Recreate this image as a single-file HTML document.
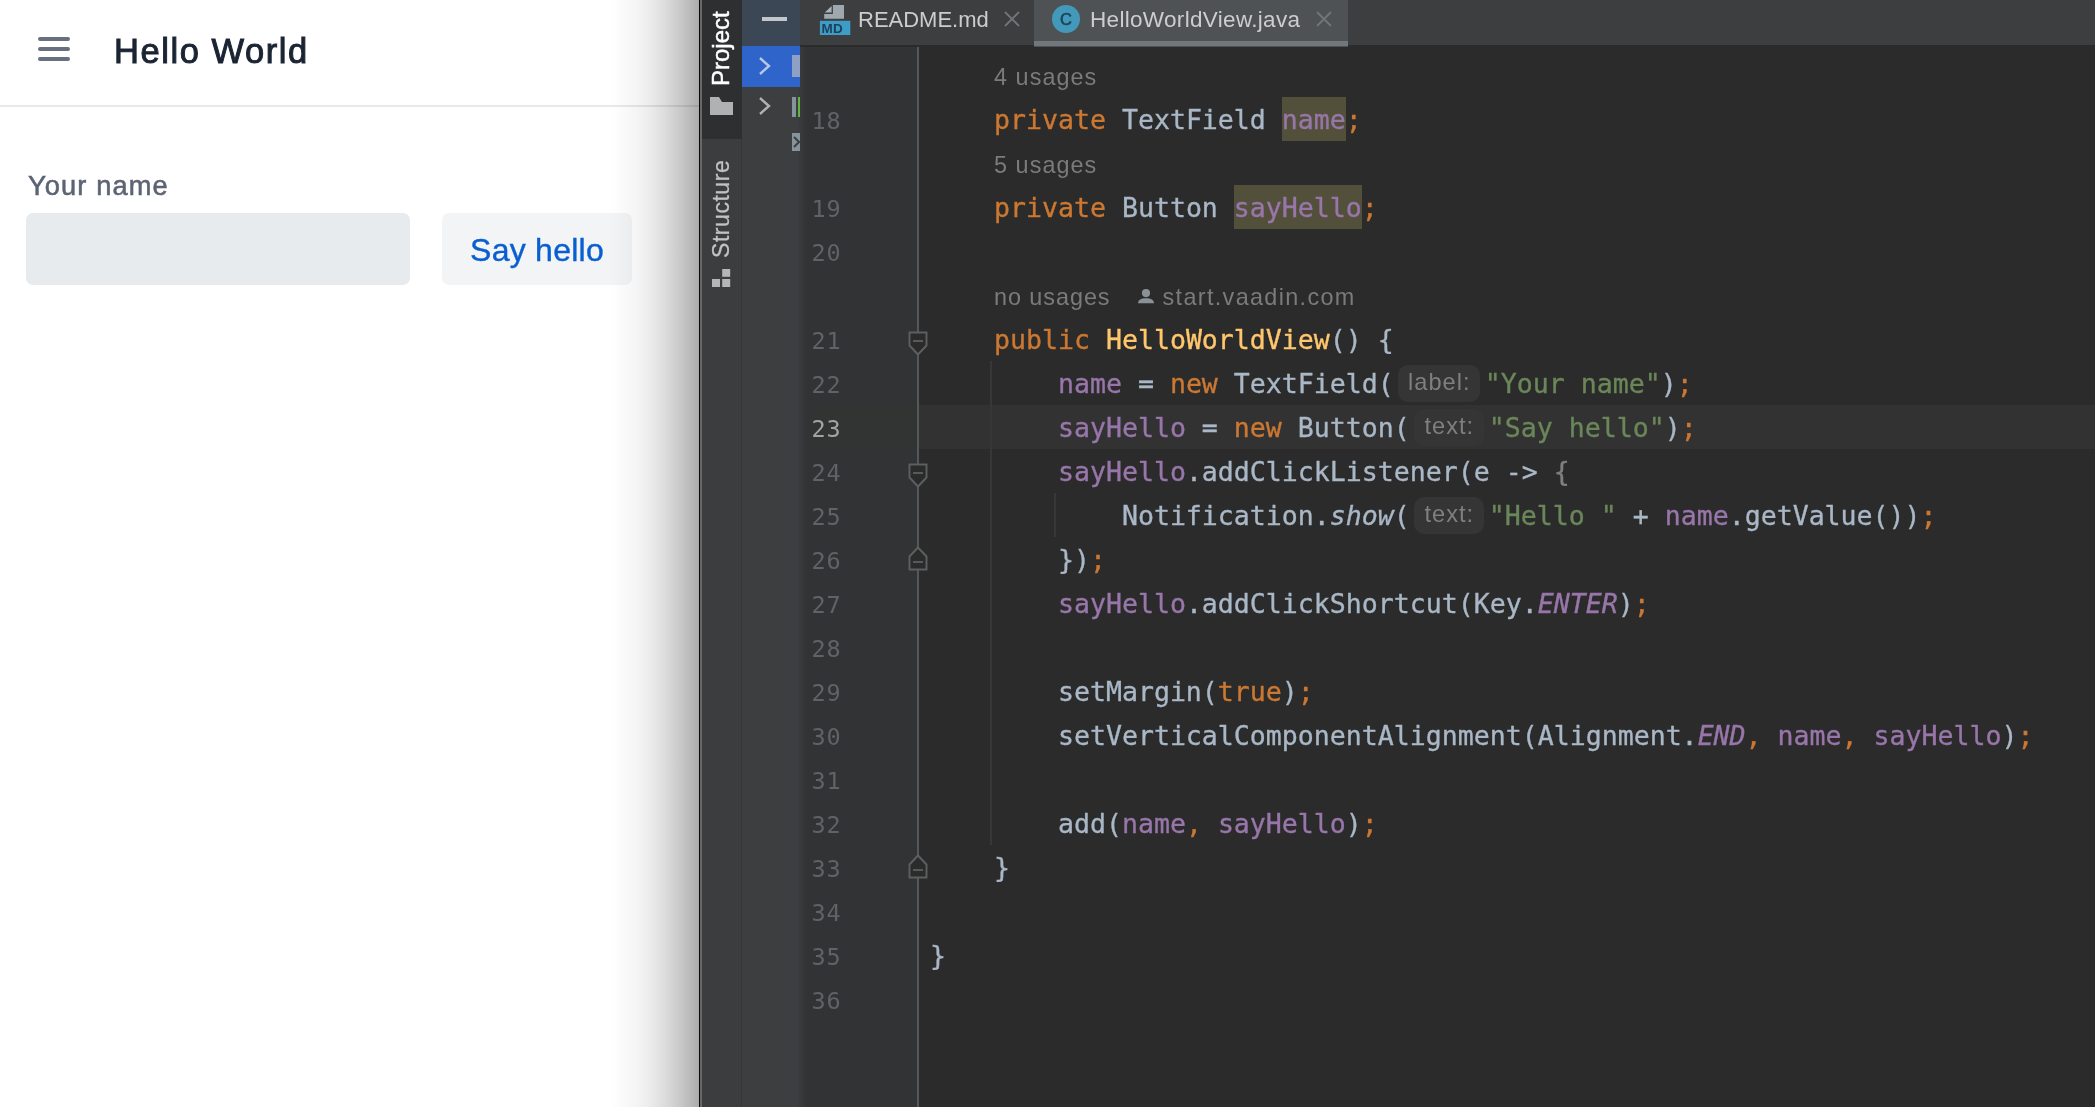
<!DOCTYPE html>
<html lang="en">
<head>
<meta charset="utf-8">
<title>Hello World</title>
<style>
*{box-sizing:border-box;margin:0;padding:0}
html,body{width:2095px;height:1107px;overflow:hidden;background:#2b2b2b}
body{position:relative;font-family:"Liberation Sans",sans-serif;-webkit-font-smoothing:antialiased}
.abs{position:absolute}
/* ---------- left: Vaadin app ---------- */
#app{position:absolute;left:0;top:0;width:699px;height:1107px;background:#fff;overflow:hidden}
#app .hdrline{position:absolute;left:0;top:105px;width:699px;height:2px;background:#e7e9ec}
#app .burger i{position:absolute;left:38px;width:32px;height:4.4px;border-radius:2.2px;background:#687080}
#app h1{position:absolute;left:114px;top:29px;font-size:34.500px;line-height:45.500px;font-weight:400;color:#1b2433;letter-spacing:1.560px;-webkit-text-stroke:1px #1b2433;white-space:nowrap}
#app .lbl{position:absolute;left:28px;top:168px;font-size:27.2px;line-height:36px;color:#5c6473;white-space:nowrap;letter-spacing:1.150px;-webkit-text-stroke:.55px #5c6473}
#app .inp{position:absolute;left:26px;top:213px;width:384px;height:72px;border-radius:7px;background:#e8ebed}
#app .btn{position:absolute;left:442px;top:213px;width:190px;height:72px;border-radius:7px;background:#f2f4f6;color:#0a5fd0;font-size:32px;line-height:74px;letter-spacing:.25px;text-align:center;white-space:nowrap;-webkit-text-stroke:0.4px #0a5fd0}
#app .shade{position:absolute;left:610px;top:0;width:89px;height:1107px;background:linear-gradient(90deg,rgba(0,0,0,0) 0%,rgba(0,0,0,.016) 12%,rgba(0,0,0,.04) 29%,rgba(0,0,0,.078) 46%,rgba(0,0,0,.145) 64%,rgba(0,0,0,.224) 81%,rgba(0,0,0,.31) 97%,rgba(0,0,0,.33) 100%)}
/* ---------- right: IDE ---------- */
#edge{z-index:5;position:absolute;left:699px;top:0;width:2.600px;height:1107px;background:linear-gradient(90deg,#080808 0,#080808 1.100px,#676869 1.300px,#676869 2.600px)}
#strip{position:absolute;left:701px;top:0;width:41px;height:1107px;background:#3c3d3f;border-right:1.600px solid #353638}
#strip .sel{position:absolute;left:0;top:0;width:41px;height:139px;background:#2d2f30}
.vtxt{position:absolute;transform-origin:0 0;transform:rotate(-90deg);white-space:nowrap;font-size:23px;line-height:26px}
#proj{position:absolute;left:742px;top:0;width:58px;height:1107px;background:linear-gradient(90deg,#3d3e40 0,#3d3e40 55px,#393a3d 58px)}
#pshade{position:absolute;left:800px;top:47px;width:6px;height:1060px;background:linear-gradient(90deg,rgba(61,62,64,.7),rgba(61,62,64,0))}
#proj .ph{position:absolute;left:0;top:0;width:58px;height:46.500px;background:#3c4755}
#proj .row1{position:absolute;left:0;top:46px;width:58px;height:41px;background:#2f65ca}
#tabs{position:absolute;left:800px;top:0;width:1295px;height:47px;background:#3d3e40}
#tabs .tabline{position:absolute;left:0;top:44.500px;width:1295px;height:2.500px;background:#2b2b2c}
#tabs .active{position:absolute;left:234px;top:0;width:314px;height:47px;background:#4e5254}
#tabs .active u{position:absolute;left:0;top:41px;width:314px;height:5px;background:#72777b}
.tabtxt{position:absolute;top:5px;font-size:22px;line-height:30px;color:#cdcdcd;white-space:nowrap}
#gutter{position:absolute;left:800px;top:47px;width:117px;height:1060px;background:#313335}
#gline{position:absolute;left:917px;top:47px;width:2px;height:1060px;background:#555759}
#ed{position:absolute;left:919px;top:47px;width:1176px;height:1060px;background:#2b2b2b}
#caret{position:absolute;left:917px;top:405px;width:1178px;height:44px;background:#323232}
</style>
</head>
<body>
<div id="root" style="position:absolute;left:0;top:0;width:2095px;height:1107px;will-change:transform">
<!-- LEFT: app -->
<div id="app">
  <div class="burger"><i style="top:37px"></i><i style="top:47px"></i><i style="top:57px"></i></div>
  <h1>Hello World</h1>
  <div class="hdrline"></div>
  <div class="lbl">Your name</div>
  <div class="inp"></div>
  <div class="btn">Say hello</div>
  <div class="shade"></div>
</div>
<div id="edge"></div>
<!-- tool window strip -->
<div id="strip">
  <div class="sel"></div>
  <div class="vtxt" style="left:7px;top:85.500px;color:#fff;font-size:24px;-webkit-text-stroke:.45px #fff">Project</div>
  <svg class="abs" style="left:9px;top:96px" width="24" height="20" viewBox="0 0 24 20"><path d="M0 1h9l3 5h11v13H0z" fill="#afb1b3"/></svg>
  <div class="vtxt" style="left:7px;top:257.500px;color:#c2c2c2;letter-spacing:.55px;-webkit-text-stroke:.25px #c2c2c2">Structure</div>
  <svg class="abs" style="left:11px;top:269px" width="20" height="20" viewBox="0 0 20 20"><rect x="10.200" y="0" width="8" height="7.800" fill="#b4b6b8"/><rect x="0" y="10" width="8" height="8" fill="#b4b6b8"/><rect x="10.200" y="10" width="8" height="8" fill="#b4b6b8"/></svg>
</div>
<!-- project panel slice -->
<div id="proj">
  <div class="ph"></div>
  <div class="abs" style="left:20px;top:16.600px;width:24.600px;height:4.400px;background:#c2c6cd"></div>
  <div class="row1"></div>
  <svg class="abs" style="left:15px;top:56px" width="16" height="20" viewBox="0 0 16 20"><path d="M3 2l9 8-9 8" fill="none" stroke="#b9c6e6" stroke-width="2.4"/></svg>
  <div class="abs" style="left:50px;top:55px;width:8px;height:22px;background:#8ea1c4"></div>
  <svg class="abs" style="left:15px;top:96px" width="16" height="20" viewBox="0 0 16 20"><path d="M3 2l9 8-9 8" fill="none" stroke="#afb1b3" stroke-width="2.4"/></svg>
  <div class="abs" style="left:50px;top:97px;width:4px;height:20px;background:#87939a"></div>
  <div class="abs" style="left:55.5px;top:97px;width:2.5px;height:20px;background:#62b543"></div>
  <div class="abs" style="left:50px;top:133px;width:8px;height:18px;background:#87939a"></div>
  <svg class="abs" style="left:50px;top:133px" width="8" height="18" viewBox="0 0 8 18"><path d="M2 4l5 5-5 5" fill="none" stroke="#3c3f41" stroke-width="2"/></svg>
</div>
<!-- tabs -->
<div id="tabs">
  <div class="tabline"></div>
  <div class="active"><u></u></div>
  <svg class="abs" style="left:19px;top:4px" width="34" height="34" viewBox="0 0 34 34"><path d="M13.900 1h11.100v13.700H5.200v-4.800h8.700z" fill="#9fa8ae"/><path d="M5.800 8.400l6.800-6.500v6.500z" fill="#aab2b8"/><rect x="0.900" y="16.800" width="30.400" height="14.200" fill="#3d9dc6"/></svg>
  <div class="abs" style="left:21.500px;top:22px;font-size:13.500px;line-height:13px;font-weight:700;color:#1d3f58;letter-spacing:.3px">MD</div>
  <div class="tabtxt" style="left:58px">README.md</div>
  <svg class="abs" style="left:204px;top:11px" width="16" height="16" viewBox="0 0 16 16"><path d="M1 1l14 14M15 1L1 15" stroke="#717578" stroke-width="1.8" fill="none"/></svg>
  <svg class="abs" style="left:252px;top:5px" width="28" height="28" viewBox="0 0 28 28"><circle cx="14" cy="14" r="14" fill="#4299ba"/></svg>
  <div class="abs" style="left:252px;top:5px;width:28px;height:28px;text-align:center;font-size:16.500px;line-height:29px;color:#1c4358;-webkit-text-stroke:.55px #1c4358">C</div>
  <div class="tabtxt" style="left:290px;font-size:22.500px;letter-spacing:.32px">HelloWorldView.java</div>
  <svg class="abs" style="left:516px;top:11px" width="16" height="16" viewBox="0 0 16 16"><path d="M1 1l14 14M15 1L1 15" stroke="#717578" stroke-width="1.8" fill="none"/></svg>
</div>
<div id="gutter"></div>
<div id="pshade"></div>
<div id="ed"></div>
<div id="caret"></div>
<div class="abs" style="left:806px;top:405px;width:111px;height:44px;background:#323333"></div>
<div id="gline"></div>
<!--CODE-->
<style>
.ln{position:absolute;left:930px;height:44px;line-height:46px;font-family:"DejaVu Sans Mono","Liberation Mono",monospace;font-size:26.576px;color:#a9b7c6;white-space:pre;-webkit-text-stroke:.35px}
.no{position:absolute;left:800px;width:41.5px;height:44px;line-height:48px;text-align:right;font-family:"DejaVu Sans Mono","Liberation Mono",monospace;font-size:23.500px;letter-spacing:.9px;color:#606366;white-space:pre}
.no.cur{color:#a4a3a3}
.k{color:#cc7832}.f{color:#9876aa}.s{color:#6a8759}.m{color:#ffc66d}.c{color:#9876aa;font-style:italic}.i{font-style:italic}.g{color:#808080}
.w{background:#52503a;display:inline-block;height:44px;vertical-align:top}
.h{-webkit-text-stroke:0;display:inline-block;vertical-align:top;height:36.500px;line-height:35.500px;margin-top:4px;border-radius:10px;background:#353535;color:#7f7f7f;font-family:"Liberation Sans",sans-serif;font-size:23.600px;text-align:center;letter-spacing:1.050px;padding-left:1.050px}
.u{position:absolute;height:44px;line-height:48px;font-family:"Liberation Sans",sans-serif;font-size:23.400px;letter-spacing:1.050px;color:#7b7b7b;white-space:nowrap}
.ig{position:absolute;width:2px;background:#373737}
</style>

<div class="u" style="left:994px;top:53px">4 usages</div>
<div class="no" style="top:97px">18</div>
<div class="ln" style="top:97px">    <span class="k">private</span> TextField <span class="w"><span class="f">name</span></span><span class="k">;</span></div>
<div class="u" style="left:994px;top:141px">5 usages</div>
<div class="no" style="top:185px">19</div>
<div class="ln" style="top:185px">    <span class="k">private</span> Button <span class="w"><span class="f">sayHello</span></span><span class="k">;</span></div>
<div class="no" style="top:229px">20</div>
<div class="u" style="left:994px;top:273px;letter-spacing:.950px">no usages</div>
<svg class="abs" style="left:1138px;top:289.4px" width="16" height="16" viewBox="0 0 16 16"><circle cx="8" cy="4.100" r="4.100" fill="#8c9195"/><path d="M0 14.300C0 11.200 3 9.300 8 9.300s8 1.900 8 5z" fill="#8c9195"/></svg>
<div class="u" style="left:1162.500px;top:273px;letter-spacing:1.350px">start.vaadin.com</div>
<div class="no" style="top:317px">21</div>
<div class="ln" style="top:317px">    <span class="k">public</span> <span class="m">HelloWorldView</span>() {</div>
<div class="no" style="top:361px">22</div>
<div class="ln" style="top:361px">        <span class="f">name</span> = <span class="k">new</span> TextField(<span class="h" style="width:82px;margin-left:4px;margin-right:5px">label:</span><span class="s">&quot;Your name&quot;</span>)<span class="k">;</span></div>
<div class="no cur" style="top:405px">23</div>
<div class="ln" style="top:405px">        <span class="f">sayHello</span> = <span class="k">new</span> Button(<span class="h" style="width:70px;margin-left:4px;margin-right:5px">text:</span><span class="s">&quot;Say hello&quot;</span>)<span class="k">;</span></div>
<div class="no" style="top:449px">24</div>
<div class="ln" style="top:449px">        <span class="f">sayHello</span>.addClickListener(e -&gt; <span class="g">{</span></div>
<div class="no" style="top:493px">25</div>
<div class="ln" style="top:493px">            Notification.<span class="i">show</span>(<span class="h" style="width:70px;margin-left:4px;margin-right:5px">text:</span><span class="s">&quot;Hello &quot;</span> + <span class="f">name</span>.getValue())<span class="k">;</span></div>
<div class="no" style="top:537px">26</div>
<div class="ln" style="top:537px">        })<span class="k">;</span></div>
<div class="no" style="top:581px">27</div>
<div class="ln" style="top:581px">        <span class="f">sayHello</span>.addClickShortcut(Key.<span class="c">ENTER</span>)<span class="k">;</span></div>
<div class="no" style="top:625px">28</div>
<div class="no" style="top:669px">29</div>
<div class="ln" style="top:669px">        setMargin(<span class="k">true</span>)<span class="k">;</span></div>
<div class="no" style="top:713px">30</div>
<div class="ln" style="top:713px">        setVerticalComponentAlignment(Alignment.<span class="c">END</span><span class="k">,</span> <span class="f">name</span><span class="k">,</span> <span class="f">sayHello</span>)<span class="k">;</span></div>
<div class="no" style="top:757px">31</div>
<div class="no" style="top:801px">32</div>
<div class="ln" style="top:801px">        add(<span class="f">name</span><span class="k">,</span> <span class="f">sayHello</span>)<span class="k">;</span></div>
<div class="no" style="top:845px">33</div>
<div class="ln" style="top:845px">    }</div>
<div class="no" style="top:889px">34</div>
<div class="no" style="top:933px">35</div>
<div class="ln" style="top:933px">}</div>
<div class="no" style="top:977px">36</div>
<div class="ig" style="left:990px;top:361px;height:484px"></div>
<div class="ig" style="left:1054px;top:493px;height:44px"></div>
<svg class="abs" style="left:908px;top:331px" width="20" height="26" viewBox="0 0 20 26"><path d="M1.500 1.500h17v13l-8.500 9-8.500-9z" fill="#2b2b2b" stroke="#5d5f61" stroke-width="1.900"/><path d="M5 10h10" stroke="#5d5f61" stroke-width="1.800"/></svg>
<svg class="abs" style="left:908px;top:463px" width="20" height="26" viewBox="0 0 20 26"><path d="M1.500 1.500h17v13l-8.500 9-8.500-9z" fill="#2b2b2b" stroke="#5d5f61" stroke-width="1.900"/><path d="M5 10h10" stroke="#5d5f61" stroke-width="1.800"/></svg>
<svg class="abs" style="left:908px;top:544.8px" width="20" height="26" viewBox="0 0 20 26"><path d="M1.500 24.500h17v-13l-8.500-9-8.500 9z" fill="#2b2b2b" stroke="#5d5f61" stroke-width="1.900"/><path d="M5 17h10" stroke="#5d5f61" stroke-width="1.800"/></svg>
<svg class="abs" style="left:908px;top:852.8px" width="20" height="26" viewBox="0 0 20 26"><path d="M1.500 24.500h17v-13l-8.500-9-8.500 9z" fill="#2b2b2b" stroke="#5d5f61" stroke-width="1.900"/><path d="M5 17h10" stroke="#5d5f61" stroke-width="1.800"/></svg>
<!--/CODE-->
</div>
</body>
</html>
